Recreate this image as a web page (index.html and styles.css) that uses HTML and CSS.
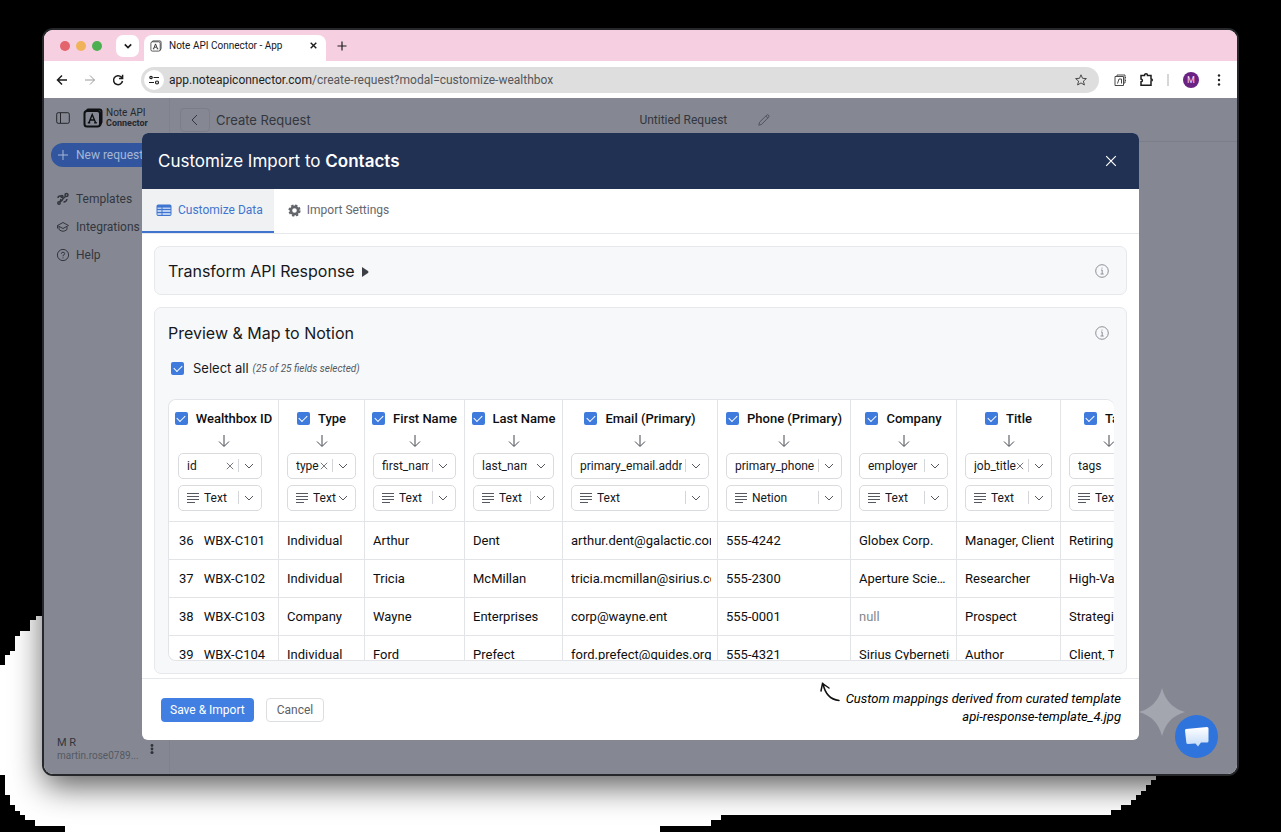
FILE: index.html
```html
<!DOCTYPE html>
<html lang="en">
<head>
<meta charset="utf-8">
<title>Note API Connector - App</title>
<link rel="stylesheet" href="styles.css">
</head>
<body>
<svg class="defs" aria-hidden="true">
  <symbol id="chev" viewBox="0 0 10 10"><path d="M1 3l4 4 4-4"/></symbol>
  <symbol id="x" viewBox="0 0 10 10"><path d="M1 1l8 8M9 1l-8 8"/></symbol>
  <symbol id="lines" viewBox="0 0 12 10"><path d="M0 .5h12M0 3.500h12M0 6.500h12M0 9.500h8"/></symbol>
  <symbol id="down" viewBox="0 0 12 12"><path d="M6 0v11M1 6.500l5 5 5-5"/></symbol>
  <symbol id="info" viewBox="0 0 14 14"><circle cx="7" cy="7" r="6.300"/><path d="M6 6h1.200v4M5.500 10h3.200M7 3.600v1"/></symbol>
  <symbol id="logo" viewBox="0 0 20 20"><path d="M3 3l2-1.500h11.500q2 0 2 2V14l-1.500 3.500"/><rect x="1.500" y="3" width="15.500" height="15.500" rx="2.500"/><path d="M6 14.500L9.200 6.500l3.300 8M7.200 12h4M4.800 14.700h2.400M11.200 14.700h2.600" stroke-width="1.400"/></symbol>
</svg>
<div class="scene">
  <svg class="blob" viewBox="0 0 1281 832" preserveAspectRatio="none" aria-hidden="true"><path fill="#fff" d="M44 616H36V620H30V631H20V636H15V651H10V655H5V665H0V775H5V795H10V805H15V811H20V815H25V820H35V826H65V832H660V826H711V820H721V815H1111V810H1121V805H1131V800H1136V795H1141V791H1146V785H1151V780H1156V775H1160V760H44Z"/></svg>
  <div class="window">
    <div class="tabstrip">
      <div class="lights"><i class="red"></i><i class="amber"></i><i class="green"></i></div>
      <button class="tab-search" aria-label="Search tabs"><svg class="ic s8 bold"><use href="#chev"/></svg></button>
      <div class="tab">
        <svg class="ic s12 dark"><use href="#logo"/></svg>
        <span class="tab-title">Note API Connector - App</span>
        <button class="plain" aria-label="Close tab"><svg class="ic s7 bold"><use href="#x"/></svg></button>
      </div>
      <button class="plain new-tab" aria-label="New tab"><svg class="ic s10 dark" viewBox="0 0 10 10"><path d="M5 .5v9M.5 5h9"/></svg></button>
    </div>
    <div class="toolbar">
      <div class="nav">
        <button class="plain" aria-label="Back"><svg class="ic s12 bold" viewBox="0 0 12 12"><path d="M11 6H1.500M6 1.500L1.500 6 6 10.500"/></svg></button>
        <button class="plain" aria-label="Forward"><svg class="ic s12 faint" viewBox="0 0 12 12"><path d="M1 6h9.500M6 1.500L10.500 6 6 10.500"/></svg></button>
        <button class="plain" aria-label="Reload"><svg class="ic s12 bold" viewBox="0 0 12 12"><path d="M10.500 7A4.500 4.500 0 1 1 9.300 3L10.500 4.200M10.600 .8v3.600H7"/></svg></button>
      </div>
      <div class="address">
        <span class="site"><svg class="ic s12 dark" viewBox="0 0 12 12"><circle cx="3" cy="3.500" r="1.200"/><path d="M5.500 3.500h5.500M1 8.500h5"/><circle cx="9" cy="8.500" r="1.500"/></svg></span>
        <span class="url">app.noteapiconnector.com<span>/create-request?modal=customize-wealthbox</span></span>
        <button class="plain" aria-label="Bookmark"><svg class="ic s12 mid" viewBox="0 0 12 12"><path d="M6 .8l1.500 3.500 3.900.3-3 2.500 1 3.900L6 8.900 2.600 11l1-3.900-3-2.500 3.900-.3z"/></svg></button>
      </div>
      <div class="tools">
        <button class="plain" aria-label="Extension"><svg class="ic s12 mid" viewBox="0 0 12 12"><path d="M3 2.500V1h8v8H9.500M1 2.500h8.500v9H1zM3.500 9.500l1.500-4.500h2.500V9.500M11 3.500h1M11 6.500h1"/></svg></button>
        <button class="plain" aria-label="Extensions"><svg class="ic s13 bold" viewBox="0 0 13 13"><path d="M1 2.500h3.500q0-1.700 1.500-1.700t1.500 1.700H11V6q1.300 0 1.300 1T11 8v4.200H1V8.800q1.400-.2 1.400-1.400T1 6z"/></svg></button>
        <span class="sep"></span>
        <button class="avatar" aria-label="Profile">M</button>
        <button class="plain" aria-label="Menu"><svg class="ic s12" viewBox="0 0 12 12"><g fill="#222" stroke="none"><circle cx="6" cy="1.500" r="1.200"/><circle cx="6" cy="6" r="1.200"/><circle cx="6" cy="10.500" r="1.200"/></g></svg></button>
      </div>
    </div>
    <div class="app">
      <aside class="sidebar">
        <div class="brand">
          <svg class="ic s14" viewBox="0 0 14 12"><rect x=".7" y=".7" width="12.600" height="10.600" rx="1.500"/><path d="M4.500 1v10"/></svg>
          <svg class="ic s20 logo"><use href="#logo"/></svg>
          <span>Note API<br><b>Connector</b></span>
        </div>
        <button class="new-req"><svg class="ic s10" viewBox="0 0 10 10"><path d="M5 0v10M0 5h10"/></svg>New request</button>
        <nav class="menu">
          <a href="#"><svg class="ic s12 strong" viewBox="0 0 12 12"><path d="M1 5q0-2 2-2h1M4 6L3 9M6.500 9q3 0 3.500-3"/><circle cx="5" cy="3.500" r="1"/><circle cx="9.500" cy="2" r="1.500"/><circle cx="2" cy="10" r="1.200"/><path d="M5.500 6l3-2.500M4 8.500l2-2.500"/></svg>Templates</a>
          <a href="#"><svg class="ic s12" viewBox="0 0 12 12"><path d="M6 1.500L11.500 4.500 6 7.500.5 4.500zM2 6v2.500Q6 12 10 8.500V6M.5 4.500v3"/></svg>Integrations</a>
          <a href="#"><svg class="ic s12" viewBox="0 0 12 12"><circle cx="6" cy="6" r="5.600"/><path d="M4.300 4.800Q4.400 3.200 6 3.200t1.700 1.500Q7.700 5.600 6 6.500v.8M6 8.400v1"/></svg>Help</a>
        </nav>
        <div class="user">
          <div class="who"><span>M R</span><small>martin.rose0789...</small></div>
          <svg class="ic s10" viewBox="0 0 10 10"><g fill="#30333b" stroke="none"><circle cx="5" cy="1.500" r="1.400"/><circle cx="5" cy="5" r="1.400"/><circle cx="5" cy="8.500" r="1.600"/></g></svg>
        </div>
      </aside>
      <main class="main">
        <header class="topbar">
          <button class="back" aria-label="Go back"><svg class="ic s12" viewBox="0 0 12 12"><path d="M8 1L3 6l5 5"/></svg></button>
          <h1>Create Request</h1>
          <div class="req-name"><span>Untitied Request</span><button class="plain rename" aria-label="Rename"><svg class="ic s12" viewBox="0 0 12 12"><path d="M.8 11.200l.8-3L8.800 1q1-.7 1.800.2t.1 1.900L3.600 10.400zM7.800 2l2 2"/></svg></button></div>
        </header>
      </main>
      <svg class="sparkle" viewBox="0 0 46 48" aria-hidden="true"><path fill="#a3a6ae" d="M23 0Q28 19 46 24 28 29 23 48 18 29 0 24 18 19 23 0z"/></svg>
      <section class="modal" role="dialog" aria-labelledby="dlg-title">
        <header class="modal-head"><h2 id="dlg-title">Customize Import to <b>Contacts</b></h2><button class="plain" aria-label="Close"><svg class="ic s12"><use href="#x"/></svg></button></header>
        <div class="tabs">
          <button class="on"><svg width="16" height="12" viewBox="0 0 16 12"><rect x="1" y="1" width="14" height="10.500" rx="1" fill="#b9cff2" stroke="#3f75cf"/><path d="M1 5.500h14M1 8.500h14M6 1v10.500" stroke="#3f75cf"/><path d="M1 1h14v2.500H1z" fill="#3f75cf"/></svg>Customize Data</button>
          <button><svg width="13" height="13" viewBox="0 0 13 13"><circle cx="6.500" cy="6.500" r="3.600" fill="none" stroke="#62656b" stroke-width="2.600"/><circle cx="6.500" cy="6.500" r="5.300" fill="none" stroke="#62656b" stroke-width="1.600" stroke-dasharray="2.400 1.760"/></svg>Import Settings</button>
        </div>
        <div class="modal-body">
          <section class="card row"><h3>Transform API Response <svg width="8" height="10" viewBox="0 0 8 10"><path fill="#3d4046" d="M1 0l6 4q1 1 0 2l-6 4z"/></svg></h3><button class="plain" aria-label="About transform"><svg class="ic s14 grey"><use href="#info"/></svg></button></section>
          <section class="card grow">
            <div class="row"><h3>Preview &amp; Map to Notion</h3><button class="plain" aria-label="About preview"><svg class="ic s14 grey"><use href="#info"/></svg></button></div>
            <label class="select-all"><input type="checkbox" checked>Select all <em>(25 of 25 fields selected)</em></label>
            <div class="table-wrap">
              <table>
                <colgroup><col class="w110"><col class="w86"><col class="w100"><col class="w98"><col class="w155"><col class="w133"><col class="w106"><col class="w104"><col class="w96"></colgroup>
                <thead><tr id="fields"></tr></thead>
                <tbody id="rows"></tbody>
              </table>
            </div>
          </section>
        </div>
        <footer class="modal-foot">
          <button class="primary">Save &amp; Import</button><button class="secondary">Cancel</button>
          <div class="note"><svg width="22" height="20" viewBox="0 0 22 20"><path d="M20 18.500Q7 17 4 1.500M2 9L3.500 1.500 10 6"/></svg><p>Custom mappings derived from curated template<br>api-response-template_4.jpg</p></div>
        </footer>
      </section>
      <button class="chat" aria-label="Open chat"><svg width="26" height="22" viewBox="0 0 26 22"><defs><linearGradient id="g" x2="0" y2="1"><stop stop-color="#fff"/><stop offset="1" stop-color="#c3dbf8"/></linearGradient></defs><path fill="url(#g)" d="M2 3L23 1q1.500 0 1.500 1.500V15q0 1.500-1.500 1.500H17L14 20.500 11.500 17.500 4 18q-1.500 0-1.700-1.500L1 4.500Q1 3 2 3z"/></svg></button>
    </div>
  </div>
</div>
<script src="app.js"></script>
</body>
</html>
```
FILE: styles.css
```css
* { box-sizing: border-box; }
body { margin: 0; background: #000; font-family: Roboto, "Liberation Sans", sans-serif; font-size: 12px; color: #16181c; }
button { font: inherit; color: inherit; border: 0; background: none; padding: 0; cursor: pointer; }
h1, h2, h3, p { margin: 0; font-weight: 400; }
h2, h3, .select-all { font-family: Inter, "Liberation Sans", sans-serif; }
a { color: inherit; text-decoration: none; }

.defs { position: absolute; width: 0; height: 0; }
.ic { fill: none; stroke: currentColor; stroke-width: 1; flex: none; display: block; overflow: visible; }
.s7 { width: 7px; height: 7px; }
.s8 { width: 8px; height: 8px; }
.s10 { width: 10px; height: 10px; }
.s12 { width: 12px; height: 12px; }
.s13 { width: 13px; height: 13px; }
.s14 { width: 14px; height: 14px; }
.s20 { width: 20px; height: 20px; }
.bold { stroke-width: 1.5; color: #1c1c1c; }
.s8.bold, .s7.bold { stroke-width: 2; }
.dark { stroke-width: 1.2; color: #1f1f1f; }
.mid { color: #4a4a4a; }
.faint { color: #9a9a9a; }
.grey { color: #8d9096; }
.plain { display: flex; align-items: center; }

.scene { position: relative; min-height: 100vh; padding: 30px 44px 58px; display: flex; background: #000; overflow: hidden; }
.blob { position: absolute; inset: 0; width: 100%; height: 100%; }
.window { position: relative; flex: 1; min-width: 0; display: flex; flex-direction: column; border-radius: 9px; overflow: hidden; background: #fff; box-shadow: 0 0 0 2px #26272a, 0 12px 32px rgba(0, 0, 0, .65); }

.tabstrip { display: flex; align-items: center; height: 31px; padding-left: 16px; background: #f6cfe1; }
.lights { display: flex; gap: 6px; margin-right: 14px; }
.lights i { width: 10px; height: 10px; border-radius: 50%; }
.red { background: #e3646c; }
.amber { background: #f0b35a; }
.green { background: #4caf50; }
.tab-search { width: 23px; height: 22px; display: grid; place-items: center; border-radius: 7px; background: #fff; margin-right: 5px; }
.tab { align-self: flex-end; height: 26px; width: 182px; padding: 0 9px 5px 6px; display: flex; align-items: center; gap: 7px; border-radius: 8px 8px 0 0; background: #fff; }
.tab-title { flex: 1; font-size: 10px; white-space: nowrap; }
.new-tab { margin-left: 11px; }

.toolbar { display: flex; align-items: center; height: 37px; padding: 0 12px; background: #fff; }
.nav { display: flex; gap: 16px; margin-right: 17px; }
.address { flex: 1; display: flex; align-items: center; height: 26px; padding: 0 12px 0 3px; border-radius: 13px; background: #dedede; }
.site { width: 20px; height: 20px; display: grid; place-items: center; border-radius: 50%; background: #fff; margin-right: 5px; }
.url { flex: 1; font-size: 12px; color: #1e1e1e; white-space: nowrap; overflow: hidden; }
.url span { color: #55575b; }
.tools { display: flex; align-items: center; gap: 14px; margin-left: 15px; }
.sep { width: 2px; height: 12px; background: #d7d7d7; }
.avatar { width: 16px; height: 16px; border-radius: 50%; background: #6a2383; color: #f3d9ff; font-size: 9px; }

.app { position: relative; flex: 1; display: flex; background: #858892; color: #33363e; }
.sidebar { width: 126px; display: flex; flex-direction: column; padding: 10px 0 12px 7px; border-right: 1px solid #7f828c; }
.brand { display: flex; align-items: center; gap: 13px; padding-left: 5px; font-size: 10px; line-height: 10px; color: #25272d; }
.brand span { margin-left: -10px; }
.brand b { font-size: 9px; }
.logo { stroke-width: 2; color: #0e0f12; }
.new-req { display: flex; align-items: center; gap: 8px; height: 24px; margin: 15px -12px 0 0; padding-left: 7px; border-radius: 12px; background: #31569f; color: #a6b6d6; white-space: nowrap; }
.menu { display: flex; flex-direction: column; gap: 12px; padding: 24px 0 0 6px; line-height: 16px; }
.menu a { display: flex; align-items: center; gap: 7px; }
.strong { stroke-width: 1.5; }
.user { display: flex; align-items: center; justify-content: space-between; margin-top: auto; padding: 0 12px 0 6px; line-height: 13px; font-size: 11px; }
.who { display: flex; flex-direction: column; }
.who small { font-size: 10px; color: #555862; }
.main { flex: 1; }
.topbar { display: flex; align-items: center; height: 44px; padding-left: 10px; border-bottom: 1px solid #7b7e88; }
.back { width: 30px; height: 24px; display: grid; place-items: center; border: 1px solid #7b7e88; border-radius: 4px; }
.topbar h1 { font-family: Inter, "Liberation Sans", sans-serif; font-size: 13px; margin-left: 6px; }
.req-name { display: flex; align-items: center; gap: 31px; margin: 0 auto; padding-right: 138px; }
.rename { color: #50535c; }

.sparkle { position: absolute; right: 52px; bottom: 38px; width: 46px; height: 48px; }
.chat { position: absolute; right: 19px; bottom: 16px; width: 43px; height: 43px; display: grid; place-items: center; border-radius: 50%; background: #2f73dc; }

.modal { position: absolute; inset: 35px 98px 34px; display: flex; flex-direction: column; border-radius: 6px; overflow: hidden; background: #fff; color: #16181c; }
.modal-head { display: flex; align-items: center; justify-content: space-between; height: 56px; padding: 0 22px 0 16px; background: #213153; color: #fff; }
.modal-head h2 { font-size: 17px; }
.modal-head b { font-weight: 600; }
.tabs { display: flex; height: 45px; border-bottom: 1px solid #e7e8eb; }
.tabs button { display: flex; align-items: center; gap: 6px; padding: 0 11px 0 14px; border-bottom: 2px solid transparent; color: #65686e; }
.tabs .on { color: #3f75cf; background: #f0f1f3; border-bottom-color: #3f75cf; }
.modal-body { flex: 1; min-height: 0; display: flex; flex-direction: column; gap: 12px; padding: 12px 12px 4px; }
.card { border: 1px solid #e6e8ec; border-radius: 7px; background: #f7f8fa; }
.row { display: flex; align-items: center; justify-content: space-between; height: 49px; padding: 0 17px 0 13px; flex: none; }
.row h3 { font-size: 16px; }
.row h3 svg { margin-left: 2px; }
.grow { flex: 1; min-height: 0; display: flex; flex-direction: column; padding-bottom: 12px; }
.select-all { display: flex; align-items: center; gap: 4px; padding-left: 16px; height: 22px; font-size: 13px; }
.select-all em { font-family: Roboto, "Liberation Sans", sans-serif; font-size: 10px; color: #55585e; }

input[type=checkbox] { appearance: none; flex: none; margin: 0; width: 13px; height: 13px; border-radius: 2px; background: #3f7bdc; display: grid; place-items: center; }
input[type=checkbox]:checked::after { content: ""; width: 7px; height: 4px; border: solid #fff; border-width: 0 0 1px 1px; transform: translateY(-1px) rotate(-45deg); }
.select-all input { margin-right: 5px; }

.table-wrap { flex: 1; min-height: 0; margin: 20px 12px 0 13px; border: 1px solid #e2e4e8; border-right: 0; border-radius: 8px; background: #fff; overflow: auto; scrollbar-width: none; }
table { table-layout: fixed; width: 988px; border-collapse: separate; border-spacing: 0; color: #0d0e10; }
.w110 { width: 110px; }
.w86 { width: 86px; }
.w100 { width: 100px; }
.w98 { width: 98px; }
.w155 { width: 155px; }
.w133 { width: 133px; }
.w106 { width: 106px; }
.w104 { width: 104px; }
.w96 { width: 96px; }
th, td { border: solid #e2e4e8; border-width: 0 1px 1px 0; text-align: left; white-space: nowrap; overflow: hidden; }
th { height: 122px; padding: 0 8px; font-weight: 400; }
td { height: 38px; padding: 0 6px 0 8px; font-size: 13px; }
td div { overflow: hidden; }
td:first-child { padding-left: 10px; }
td:first-child span { margin-right: 10px; }
td .ellipsis { text-overflow: ellipsis; }
.null { color: #85888e; }
.field { display: flex; align-items: center; justify-content: center; gap: 8px; margin: 0 -6px; font-size: 13px; font-weight: 500; line-height: 16px; }
.arrow { width: 12px; height: 12px; margin: 8px auto 6px; color: #44474c; }
.combo { display: flex; align-items: center; height: 26px; padding: 0 7px 0 8px; border: 1px solid #d9dbdf; border-radius: 5px; background: #fff; color: #55585e; }
.combo + .combo { margin-top: 6px; }
th:first-child .combo { margin: 0 8px 0 1px; }
th:first-child .combo + .combo { margin-top: 6px; }
.combo select { appearance: none; flex: 1; width: 0; min-width: 0; border: 0; padding: 0; background: none; font: inherit; color: #16181c; overflow: hidden; text-overflow: clip; }
.combo .type { margin-right: 5px; }
.combo .plain { margin-right: 3px; }
.combo i { width: 1px; height: 13px; margin: 0 5px 0 1px; background: #d3d5d9; }
.combo select + i { margin-left: 3px; }
.combo .blank { background: none; }
.combo .type ~ .blank, .combo .type ~ select + .blank { margin: 0; }

.modal-foot { display: flex; align-items: center; height: 62px; padding: 0 18px 0 19px; border-top: 1px solid #e7e8eb; }
.primary, .secondary { height: 24px; border-radius: 4px; }
.primary { padding: 0 9px; background: #4180e2; color: #fff; }
.secondary { margin-left: 12px; padding: 0 10px; border: 1px solid #dcdee2; color: #5d6066; }
.note { display: flex; gap: 5px; margin-left: auto; padding-bottom: 4px; font-style: italic; font-size: 13px; line-height: 18px; text-align: right; color: #000; }
.note svg { fill: none; stroke: #111; stroke-width: 1.5; stroke-linecap: round; margin-top: -8px; }
```
FILE: app.js
```js
const fields = [
  ["Wealthbox ID", "id", true, "Text"],
  ["Type", "type", true, "Text"],
  ["First Name", "first_name", false, "Text"],
  ["Last Name", "last_name", false, "Text"],
  ["Email (Primary)", "primary_email.address", false, "Text"],
  ["Phone (Primary)", "primary_phone.number", false, "Netion"],
  ["Company", "employer", false, "Text"],
  ["Title", "job_title", true, "Text"],
  ["Tags", "tags", false, "Text"]
];
const rows = [
  ["36", "WBX-C101", "Individual", "Arthur", "Dent", "arthur.dent@galactic.com", "555-4242", "Globex Corp.", "Manager, Client", "Retiring Soon"],
  ["37", "WBX-C102", "Individual", "Tricia", "McMillan", "tricia.mcmillan@sirius.com", "555-2300", "Aperture Sciences", "Researcher", "High-Value"],
  ["38", "WBX-C103", "Company", "Wayne", "Enterprises", "corp@wayne.ent", "555-0001", null, "Prospect", "Strategic"],
  ["39", "WBX-C104", "Individual", "Ford", "Prefect", "ford.prefect@guides.org", "555-4321", "Sirius Cybernetics", "Author", "Client, Travel"]
];
const icon = (name, cls) => `<svg class="ic ${cls}"><use href="#${name}"/></svg>`;
document.getElementById("fields").innerHTML = fields.map(([label, key, clear, type]) => {
  const keyRule = label === "Last Name" ? '<i class="blank"></i>' : "<i></i>";
  const typeRule = label === "Type" ? '<i class="blank"></i>' : "<i></i>";
  return `<th>
  <label class="field"><input type="checkbox" checked>${label}</label>
  ${icon("down", "arrow")}
  <div class="combo"><select aria-label="${label} source"><option>${key}</option></select>${clear ? `<button class="plain" aria-label="Clear ${label}">${icon("x", "s8")}</button>` : ""}${keyRule}${icon("chev", "s10")}</div>
  <div class="combo">${icon("lines", "s12 type")}<select aria-label="${label} type"><option>${type}</option></select>${typeRule}${icon("chev", "s10")}</div>
</th>`;
}).join("");
document.getElementById("rows").innerHTML = rows.map(([n, id, ...rest]) => `<tr><td><span>${n}</span>${id}</td>${rest.map(v =>
  v === null ? `<td><div class="null">null</div></td>` : `<td><div${v.startsWith("Aperture") ? ' class="ellipsis"' : ""}>${v}</div></td>`).join("")}</tr>`).join("");
```
